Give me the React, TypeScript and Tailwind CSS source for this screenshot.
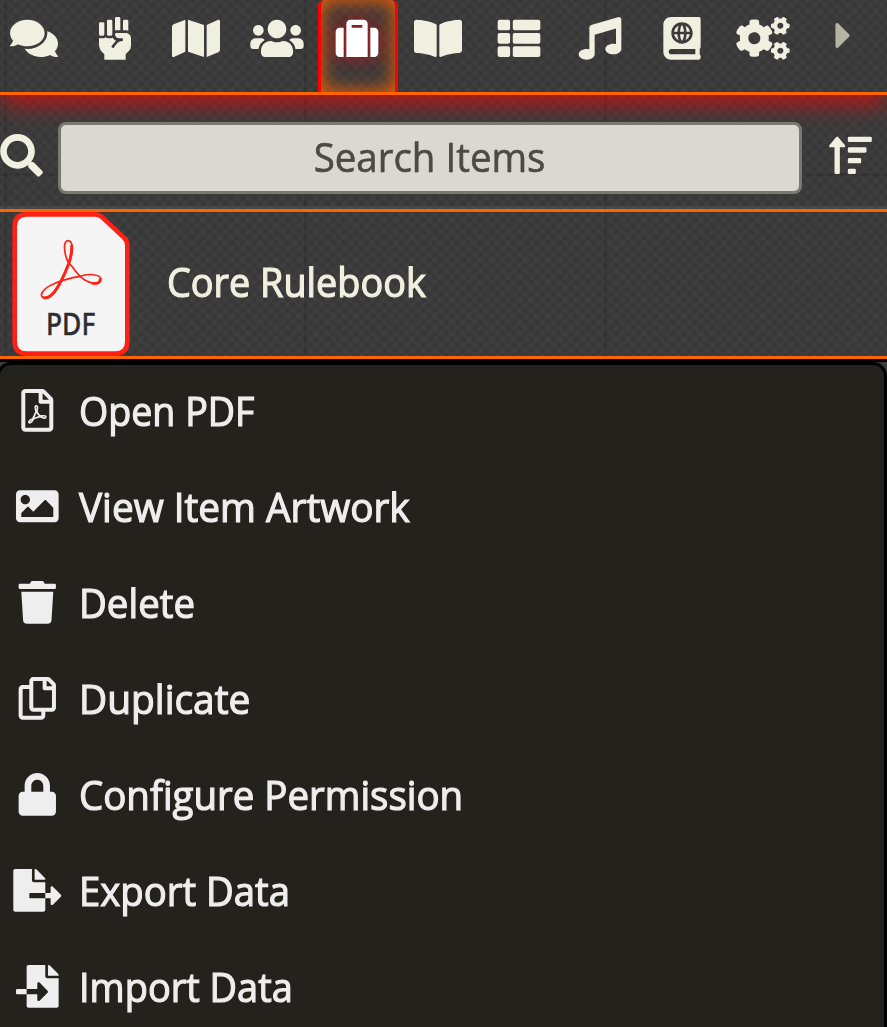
import type { IconType } from "react-icons";
import {
  FaAtlas, FaBookOpen, FaCaretRight, FaCogs, FaComments, FaFileExport, FaFileImport,
  FaFistRaised, FaImage, FaLock, FaMap, FaMusic, FaRegCopy, FaRegFilePdf, FaSearch,
  FaSortAmountUp, FaSuitcase, FaThList, FaTrash, FaUsers,
} from "react-icons/fa";

const tabs: { name: string; icon: IconType }[] = [
  { name: "chat", icon: FaComments },
  { name: "combat", icon: FaFistRaised },
  { name: "scenes", icon: FaMap },
  { name: "actors", icon: FaUsers },
  { name: "items", icon: FaSuitcase },
  { name: "journal", icon: FaBookOpen },
  { name: "tables", icon: FaThList },
  { name: "playlists", icon: FaMusic },
  { name: "compendium", icon: FaAtlas },
  { name: "settings", icon: FaCogs },
];

const menu: { label: string; icon: IconType; fit: string }[] = [
  { label: "Open PDF", icon: FaRegFilePdf, fit: "scale-x-[0.917]" },
  { label: "View Item Artwork", icon: FaImage, fit: "scale-x-[0.945]" },
  { label: "Delete", icon: FaTrash, fit: "scale-x-[0.937]" },
  { label: "Duplicate", icon: FaRegCopy, fit: "scale-x-[0.948]" },
  { label: "Configure Permission", icon: FaLock, fit: "scale-x-[0.938]" },
  { label: "Export Data", icon: FaFileExport, fit: "scale-x-[0.934]" },
  { label: "Import Data", icon: FaFileImport, fit: "scale-x-[0.925]" },
];

function PdfBadge() {
  return (
    <svg viewBox="37 36 352 432" className="h-[144px] w-[118px] shrink-0">
      <path
        d="M80 43H285Q298 43 307 52L371 112Q382 121 382 136V424Q382 461 345 461H80Q44 461 44 424V80Q44 43 80 43Z"
        fill="#f5f5f5" stroke="#ff2116" strokeWidth="14"
      />
      <g fill="none" stroke="#ff2116" strokeLinecap="round" strokeLinejoin="round">
        <path strokeWidth="5" d="M205 188C192 162 188 122 204 122C220 122 221 155 207 189C221 205 229 217 240 229C263 220 303 222 303 238C303 258 265 252 240 229C193 237 126 257 124 285C125 297 146 299 162 278C184 250 195 224 207 189" />
        <path strokeWidth="9" d="M215 138C216 155 213 171 206 191C196 217 183 250 163 276C150 291 140 295 132 293" />
        <path strokeWidth="8" d="M278 250C292 252 301 247 300 238" />
      </g>
      <text x="138" y="404" textLength="148" lengthAdjust="spacingAndGlyphs" fontSize="91" fill="#2c2f30" stroke="#2c2f30" strokeWidth="1" className="font-['Noto_Sans',sans-serif] font-medium">PDF</text>
    </svg>
  );
}

export default function App() {
  return (
    <div className="flex h-[1027px] w-[887px] flex-col overflow-hidden bg-[#3b3b3b] bg-[image:linear-gradient(90deg,transparent_4px,#00000026_5px,transparent_8px),linear-gradient(transparent_173px,#00000026_174px,transparent_177px),repeating-linear-gradient(45deg,#ffffff05_0px,#ffffff05_3px,transparent_5px,transparent_8px),repeating-linear-gradient(-45deg,#00000010_0px,#00000010_3px,transparent_5px,transparent_8px)] bg-[size:300px_100%,100%_1027px,auto,auto] font-['Open_Sans','Noto_Sans',sans-serif] text-[41px] font-medium">
      <nav className="flex h-[95px] shrink-0 border-b-[3px] border-[#ff6400] text-[#f0f0e0] shadow-[0_13px_20px_-2px_#ff000096]">
        {tabs.map(({ name, icon: Icon }, i) => (
          <div
            key={name}
            className={
              name === "items"
                ? "ml-px flex h-[92px] w-20 shrink-0 justify-center rounded-t-[6px] border-x-[3px] border-[#ff0000] pr-[2px] pt-[17px] text-white shadow-[inset_0_0_20px_#ff6400]"
                : i === 0
                  ? "flex w-[74px] shrink-0 justify-center pr-[7px] pt-[17px]"
                  : i === 5 || i === 6 || i === 7
                    ? "flex w-[81px] shrink-0 justify-center pr-px pt-[17px]"
                    : "flex w-[81px] shrink-0 justify-center pt-[17px]"
            }
          >
            <Icon className={name === "items" ? "h-[42.67px] w-[54px] shrink-0 drop-shadow-[0_0_10px_#ff0000b0]" : "h-[42.67px] w-[54px] shrink-0"} />
          </div>
        ))}
        <div className="flex w-[81px] justify-center pt-[14px] text-[#b5b3a4]">
          <FaCaretRight className="h-[43px] w-[43px]" />
        </div>
      </nav>

      <header className="flex h-[117px] shrink-0 items-start border-b-[3px] border-[#ff6400] pt-[27px] shadow-[inset_0_-3px_0_#ffffff10]">
        <FaSearch className="mt-[12px] h-[42.67px] w-[43px] shrink-0 text-[#f0f0e0]" />
        <div className="ml-[15px] flex h-[72px] w-[744px] shrink-0 items-center justify-center rounded-[8px] border-[3px] border-[#7a7971] bg-[#d9d9d1] pb-[4px] leading-none text-[#4b4a44]">
          <span className="scale-x-[0.938] whitespace-nowrap [-webkit-text-stroke:0.6px_currentColor]">Search Items</span>
        </div>
        <FaSortAmountUp className="ml-[27px] mt-[12px] h-[42.67px] w-[43px] shrink-0 text-[#f0f0e0]" />
      </header>

      <section className="flex h-[147px] shrink-0 items-start border-b-[3px] border-[#ff6400] pl-[12px] text-[#f0f0e0]">
        <PdfBadge />
        <span className="ml-[37px] mt-[41px] origin-left scale-x-[0.922] whitespace-nowrap leading-[56px] [-webkit-text-stroke:1.2px_currentColor]">Core Rulebook</span>
      </section>

      <div className="h-[3px] shrink-0 bg-black" />
      <ul className="-ml-[3px] h-[680px] w-[890px] shrink-0 rounded-t-[14px] border-[3px] border-b-0 border-black bg-[#23221d] text-[#eee]">
        {menu.map(({ label, icon: Icon, fit }) => (
          <li key={label} className="flex h-24 items-start">
            <Icon className="ml-[10px] mt-[24px] h-[42.67px] w-[54.6px] shrink-0" />
            <span className={`${fit} ml-[14.4px] mt-[17px] origin-left whitespace-nowrap leading-[56px] [-webkit-text-stroke:1.2px_currentColor]`}>{label}</span>
          </li>
        ))}
      </ul>
    </div>
  );
}
